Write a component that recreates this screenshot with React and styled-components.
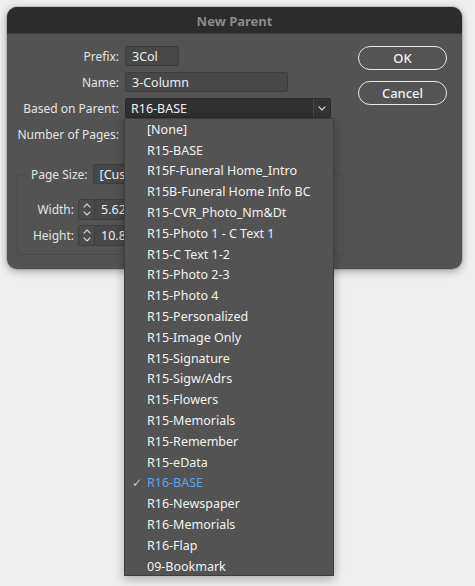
import styled, { createGlobalStyle } from "styled-components";

const GlobalStyle = createGlobalStyle`
  html, body {
    margin: 0;
    padding: 0;
    background: #efefef;
  }
  body {
    font-family: "Noto Sans", "DejaVu Sans", sans-serif;
    font-size: 12px;
    color: #e2e2e2;
  }
`;

const parents = [
  "[None]",
  "R15-BASE",
  "R15F-Funeral Home_Intro",
  "R15B-Funeral Home Info BC",
  "R15-CVR_Photo_Nm&Dt",
  "R15-Photo 1 - C Text 1",
  "R15-C Text 1-2",
  "R15-Photo 2-3",
  "R15-Photo 4",
  "R15-Personalized",
  "R15-Image Only",
  "R15-Signature",
  "R15-Sigw/Adrs",
  "R15-Flowers",
  "R15-Memorials",
  "R15-Remember",
  "R15-eData",
  "R16-BASE",
  "R16-Newspaper",
  "R16-Memorials",
  "R16-Flap",
  "09-Bookmark",
];

const selected = "R16-BASE";

function Chevron({ up }) {
  return (
    <svg width="8" height="5" viewBox="0 0 8 5">
      <path
        d={up ? "M1 4.2L4 1l3 3.2" : "M1 0.8L4 4l3-3.2"}
        fill="none"
        stroke="#d8d8d8"
        strokeWidth="1.1"
        strokeLinecap="round"
        strokeLinejoin="round"
      />
    </svg>
  );
}

function App() {
  return (
    <Page>
      <GlobalStyle />
      <Dialog>
        <TitleBar>New Parent</TitleBar>
        <Body>
          <Form>
            <Row>
              <Label>Prefix:</Label>
              <Field width="54px">3Col</Field>
            </Row>
            <Row>
              <Label>Name:</Label>
              <Field width="163px">3-Column</Field>
            </Row>
            <Row>
              <Label>Based on Parent:</Label>
              <SelectWrap>
                <SelectValue>R16-BASE</SelectValue>
                <SelectArrow>
                  <Chevron />
                </SelectArrow>
                <Menu>
                  {parents.map((name) => (
                    <MenuItem key={name} $active={name === selected}>
                      <Check>{name === selected ? "✓" : ""}</Check>
                      {name}
                    </MenuItem>
                  ))}
                </Menu>
              </SelectWrap>
            </Row>
            <Row>
              <Label>Number of Pages:</Label>
              <Field width="40px">1</Field>
            </Row>
            <Group>
              <Legend>
                <LegendLabel>Page Size:</LegendLabel>
                <Field width="180px">[Custom]</Field>
              </Legend>
              <SpinRow>
                <SpinLabel>Width:</SpinLabel>
                <Spinner>
                  <Chevron up />
                  <Chevron />
                </Spinner>
                <SpinField>5.625 in</SpinField>
              </SpinRow>
              <SpinRow>
                <SpinLabel>Height:</SpinLabel>
                <Spinner>
                  <Chevron up />
                  <Chevron />
                </Spinner>
                <SpinField>10.875 in</SpinField>
              </SpinRow>
            </Group>
          </Form>
          <Buttons>
            <Button>OK</Button>
            <Button>Cancel</Button>
          </Buttons>
        </Body>
      </Dialog>
    </Page>
  );
}

const Page = styled.div`
  height: 586px;
  padding: 7px;
  box-sizing: border-box;
`;

const Dialog = styled.div`
  width: 455px;
  height: 262px;
  border-radius: 10px;
  background: #535353;
  box-shadow: 0 2px 9px rgba(0, 0, 0, 0.35), 0 0 0 1px rgba(0, 0, 0, 0.12);
  position: relative;
`;

const TitleBar = styled.div`
  height: 27px;
  border-radius: 10px 10px 0 0;
  background: #2c2c2c;
  border-bottom: 1px dotted #444;
  box-sizing: border-box;
  display: flex;
  align-items: center;
  justify-content: center;
  font-weight: 700;
  font-size: 13px;
  color: #8b8b8b;
  padding-top: 2px;
`;

const Body = styled.div`
  display: flex;
  justify-content: space-between;
  padding: 12px 15px 0 10px;
`;

const Form = styled.div`
  display: flex;
  flex-direction: column;
  gap: 6px;
`;

const Row = styled.div`
  display: grid;
  grid-template-columns: 102px auto;
  column-gap: 6px;
  align-items: center;
  height: 20px;
  justify-self: start;
`;

const Label = styled.div`
  text-align: right;
  white-space: nowrap;
  color: #e4e4e4;
`;

const Field = styled.div`
  width: ${({ width }) => width};
  height: 20px;
  box-sizing: border-box;
  background: #484848;
  border: 1px solid #3d3d3d;
  border-radius: 2px;
  padding: 0 6px;
  display: flex;
  align-items: center;
  color: #eeeeee;
  font-size: 12.5px;
  white-space: nowrap;
  overflow: hidden;
`;

const SelectWrap = styled.div`
  position: relative;
  display: flex;
  width: 206px;
  height: 20px;
  box-sizing: border-box;
  border: 1px solid #2a2a2a;
  border-radius: 2px;
  background: #303030;
`;

const SelectValue = styled.div`
  flex: 1;
  display: flex;
  align-items: center;
  padding: 0 5px;
  font-size: 12.5px;
  color: #f0f0f0;
`;

const SelectArrow = styled.div`
  width: 16px;
  display: flex;
  align-items: center;
  justify-content: center;
  border-left: 1px solid #4a4a4a;
  background: #343434;
`;

const Menu = styled.div`
  position: absolute;
  top: 19px;
  left: -2px;
  width: 210px;
  height: 458px;
  box-sizing: border-box;
  background: #535353;
  border: 1px solid #3e3e3e;
  box-shadow: 0 3px 10px rgba(0, 0, 0, 0.3);
  z-index: 5;
`;

const MenuItem = styled.div`
  height: 20.8px;
  display: flex;
  align-items: center;
  white-space: nowrap;
  font-size: 12.5px;
  color: ${({ $active }) => ($active ? "#5aa3e6" : "#f2f2f2")};
`;

const Check = styled.span`
  width: 22px;
  padding-left: 7px;
  box-sizing: border-box;
  color: #c4c4c4;
  font-size: 12px;
`;

const Group = styled.fieldset`
  margin: 14px 0 0 0;
  padding: 15px 0 8px 0;
  width: 326px;
  box-sizing: border-box;
  border: 1px solid #4a4a4a;
  border-radius: 2px;
  display: flex;
  flex-direction: column;
  gap: 5px;
`;

const Legend = styled.legend`
  margin-left: 10px;
  padding: 0 3px;
  display: flex;
  align-items: center;
  gap: 5px;
  height: 20px;
`;

const LegendLabel = styled.span`
  color: #e4e4e4;
`;

const SpinRow = styled.div`
  display: flex;
  align-items: center;
  height: 21px;
`;

const SpinLabel = styled.div`
  width: 56px;
  text-align: right;
  margin-right: 4px;
  color: #e4e4e4;
`;

const Spinner = styled.div`
  width: 17px;
  height: 21px;
  box-sizing: border-box;
  border: 1px solid #3f3f3f;
  border-radius: 2px 0 0 2px;
  background: #4b4b4b;
  display: flex;
  flex-direction: column;
  align-items: center;
  justify-content: center;
  gap: 3px;
`;

const SpinField = styled.div`
  width: 120px;
  height: 21px;
  box-sizing: border-box;
  border: 1px solid #3f3f3f;
  border-left: none;
  background: #484848;
  padding: 0 6px;
  display: flex;
  align-items: center;
  font-size: 12.5px;
  color: #eeeeee;
`;

const Buttons = styled.div`
  display: flex;
  flex-direction: column;
  gap: 11px;
`;

const Button = styled.button`
  width: 89px;
  height: 24px;
  box-sizing: border-box;
  border: 1.5px solid #e8e8e8;
  border-radius: 12px;
  background: #545454;
  color: #f2f2f2;
  font-family: inherit;
  font-size: 13px;
  font-weight: 500;
  padding: 0;
`;

export default App;
